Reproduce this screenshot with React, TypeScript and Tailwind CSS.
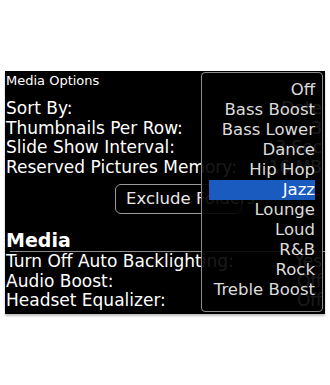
import React from 'react';

const font = { fontFamily: '"DejaVu Sans", Verdana, sans-serif' };

const topRows: [string, string][] = [
    ['Sort By:', 'Date'],
    ['Thumbnails Per Row:', '3'],
    ['Slide Show Interval:', '3 Sec'],
    ['Reserved Pictures Memory:', '16 MB'],
];

const mediaRows: [string, string][] = [
    ['Turn Off Auto Backlighting:', 'Yes'],
    ['Audio Boost:', 'Off'],
    ['Headset Equalizer:', 'Off'],
];

const options = ['Off', 'Bass Boost', 'Bass Lower', 'Dance', 'Hip Hop', 'Jazz', 'Lounge', 'Loud', 'R&B', 'Rock', 'Treble Boost'];

function Row({ label, value }: { label: string; value: string }) {
    return (
        <div className="flex justify-between pl-[1px] pr-[3px] text-[17px] leading-[19.5px] text-white whitespace-nowrap">
            <span>{label}</span>
            <span>{value}</span>
        </div>
    );
}

export default function App() {
    return (
        <div className="w-[330px] h-[385px] bg-white pt-[71px] pl-[5px]" style={font}>
            <div className="relative w-[320px] h-[243px] bg-black shadow-[0_2px_2px_rgba(0,0,0,0.25)] overflow-hidden">
                {/* Title */}
                <div className="pt-[2px] pl-[1px] text-[13px] leading-[15px] text-white">Media Options</div>

                <div className="mt-[11px]">
                    {topRows.map(([l, v]) => <Row key={l} label={l} value={v} />)}
                </div>

                <div className="mt-[7px] ml-[110px] w-[127px] h-[30px] rounded-[6px] border border-[#9a9a9a] flex items-center pl-[10px] text-[16.5px] text-[#e8e8e8] whitespace-nowrap">
                    Exclude Folders
                </div>

                {/* Media section */}
                <div className="mt-[15px] pl-[1px] text-[19px] leading-[22px] font-bold text-white">Media</div>
                <div className="ml-[5px] border-t border-[#8a8a8a]" />
                <div>
                    {mediaRows.map(([l, v]) => <Row key={l} label={l} value={v} />)}
                </div>

                {/* Equalizer popup */}
                <div className="absolute left-[196px] top-[1px] w-[122px] h-[240px] rounded-[4px] border border-[#8c8c8c] bg-black/90 pt-[7px] pl-[7px] pr-[7px]">
                    {options.map((o) => (
                        <div
                            key={o}
                            className={`text-right text-[16.5px] leading-[20px] whitespace-nowrap ${
                                o === 'Jazz' ? 'bg-[#1a5bbf] text-white' : 'text-[#dcdcdc]'
                            }`}
                        >
                            {o}
                        </div>
                    ))}
                </div>
            </div>
        </div>
    );
}
